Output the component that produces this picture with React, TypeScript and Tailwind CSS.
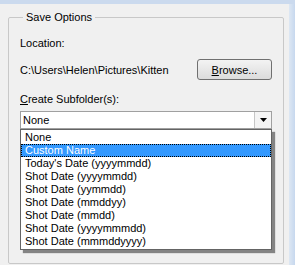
const options = [
  "None",
  "Custom Name",
  "Today's Date (yyyymmdd)",
  "Shot Date (yyyymmdd)",
  "Shot Date (yymmdd)",
  "Shot Date (mmddyy)",
  "Shot Date (mmdd)",
  "Shot Date (yyyymmmdd)",
  "Shot Date (mmmddyyyy)",
];

export default function App() {
  const selected = 1;

  return (
    <div className="flex w-[295px] h-[265px] overflow-hidden bg-[#f0f0f0] border-t-[4px] border-[#cbdaee] font-['Liberation_Sans',Arial,sans-serif] text-[11px] leading-[14px] text-black">
      <div className="w-[289px] shrink-0">
        {/* Save Options group */}
        <fieldset className="ml-[8px] mt-[6px] w-[276px] h-[254px] border border-[#c8c8c8] rounded-[2px] px-[11px]">
          <legend className="ml-[3px] px-[3px] text-[11px] leading-[14px]">Save Options</legend>

          <div className="mt-[12px]">Location:</div>

          <div className="mt-[9px] flex items-center justify-between h-[21px]">
            <span>C:\Users\Helen\Pictures\Kitten</span>
            <button className="w-[75px] h-[21px] border border-[#707070] rounded-[3px] bg-gradient-to-b from-[#f3f3f3] to-[#dcdcdc] text-[11px]">
              <span className="underline">B</span>rowse...
            </button>
          </div>

          <div className="mt-[12px]">
            <span className="underline">C</span>reate Subfolder(s):
          </div>

          <div className="relative mt-[5px]">
            {/* Combo box */}
            <div className="flex h-[18px] border border-[#a0a0a0] bg-white">
              <span className="flex-1 pl-[2px] leading-[16px]">None</span>
              <div className="w-[17px] flex items-center justify-center border-l border-[#c6c6c6] bg-[#f4f4f4]">
                <svg width="7" height="4" viewBox="0 0 7 4">
                  <path d="M0 0h7L3.5 4z" fill="#000" />
                </svg>
              </div>
            </div>

            {/* Open list */}
            <div className="absolute left-0 top-[18px] w-[252px] border border-[#646464] bg-white py-[1px] shadow-[3px_3px_1px_rgba(0,0,0,0.45)]">
              {options.map((o, i) => (
                <div
                  key={o}
                  className={
                    i === selected
                      ? "h-[13px] pl-[4px] leading-[13px] bg-[#3399ff] text-white outline outline-1 outline-dotted outline-black -outline-offset-1"
                      : "h-[13px] pl-[4px] leading-[13px]"
                  }
                >
                  {o}
                </div>
              ))}
            </div>
          </div>
        </fieldset>
      </div>
      <div className="flex-1 bg-gradient-to-r from-[#dde7f3] to-[#c7d8ee]" />
    </div>
  );
}
